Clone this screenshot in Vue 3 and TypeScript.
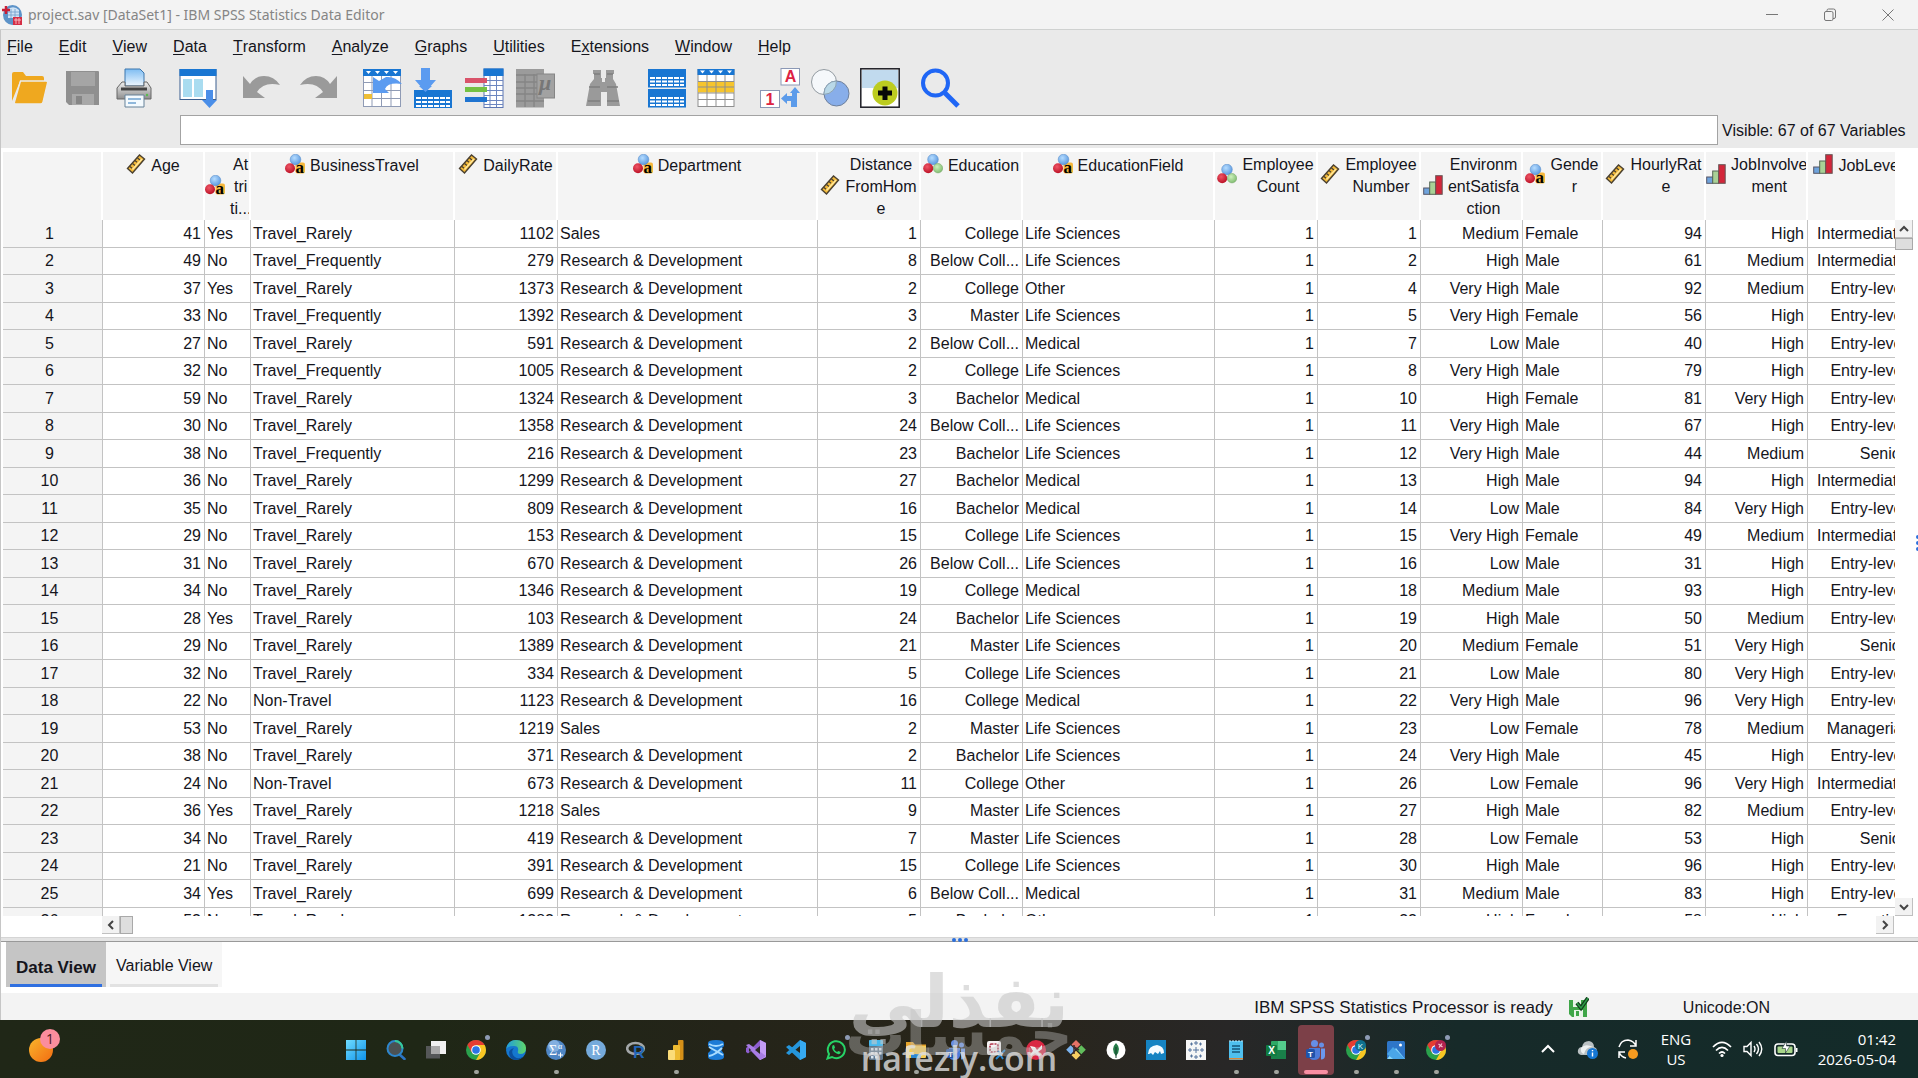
<script setup lang="ts">
import { ref } from 'vue'

type Measure = 'scale' | 'string' | 'nominal' | 'ordinal'
interface Column {
  lines: string[]
  icon: Measure
  align: 'left' | 'right'
  width: number
}

const menus: [string, string, string][] = [
  ['', 'F', 'ile'],
  ['', 'E', 'dit'],
  ['', 'V', 'iew'],
  ['', 'D', 'ata'],
  ['', 'T', 'ransform'],
  ['', 'A', 'nalyze'],
  ['', 'G', 'raphs'],
  ['', 'U', 'tilities'],
  ['E', 'x', 'tensions'],
  ['', 'W', 'indow'],
  ['', 'H', 'elp'],
]

const toolGroups: { id: string; label: string }[][] = [
  [
    { id: 'open', label: 'Open' },
    { id: 'save', label: 'Save' },
    { id: 'print', label: 'Print' },
  ],
  [{ id: 'recall', label: 'Recall dialogs' }],
  [
    { id: 'undo', label: 'Undo' },
    { id: 'redo', label: 'Redo' },
  ],
  [
    { id: 'gotocase', label: 'Go to case' },
    { id: 'gotovar', label: 'Go to variable' },
    { id: 'variables', label: 'Variables' },
    { id: 'stats', label: 'Descriptive statistics' },
  ],
  [{ id: 'find', label: 'Find' }],
  [
    { id: 'split', label: 'Split file' },
    { id: 'select', label: 'Select cases' },
  ],
  [
    { id: 'labels', label: 'Value labels' },
    { id: 'sets', label: 'Use variable sets' },
    { id: 'custom', label: 'Customize toolbar' },
  ],
  [{ id: 'search', label: 'Search' }],
]

const columns: Column[] = [
  { lines: ['Age'], icon: 'scale', align: 'right', width: 102 },
  { lines: ['At', 'tri', 'ti...'], icon: 'string', align: 'left', width: 46 },
  { lines: ['BusinessTravel'], icon: 'string', align: 'left', width: 204 },
  { lines: ['DailyRate'], icon: 'scale', align: 'right', width: 103 },
  { lines: ['Department'], icon: 'string', align: 'left', width: 260 },
  { lines: ['Distance', 'FromHom', 'e'], icon: 'scale', align: 'right', width: 103 },
  { lines: ['Education'], icon: 'nominal', align: 'right', width: 102 },
  { lines: ['EducationField'], icon: 'string', align: 'left', width: 192 },
  { lines: ['Employee', 'Count'], icon: 'nominal', align: 'right', width: 103 },
  { lines: ['Employee', 'Number'], icon: 'scale', align: 'right', width: 103 },
  { lines: ['Environm', 'entSatisfa', 'ction'], icon: 'ordinal', align: 'right', width: 102 },
  { lines: ['Gende', 'r'], icon: 'string', align: 'left', width: 80 },
  { lines: ['HourlyRat', 'e'], icon: 'scale', align: 'right', width: 103 },
  { lines: ['JobInvolve', 'ment'], icon: 'ordinal', align: 'right', width: 102 },
  { lines: ['JobLevel'], icon: 'ordinal', align: 'right', width: 102 },
]

const source = `41|Yes|Travel_Rarely|1102|Sales|1|College|Life Sciences|1|1|Medium|Female|94|High|Intermediate
49|No|Travel_Frequently|279|RD|8|Below Coll...|Life Sciences|1|2|High|Male|61|Medium|Intermediate
37|Yes|Travel_Rarely|1373|RD|2|College|Other|1|4|Very High|Male|92|Medium|Entry-level
33|No|Travel_Frequently|1392|RD|3|Master|Life Sciences|1|5|Very High|Female|56|High|Entry-level
27|No|Travel_Rarely|591|RD|2|Below Coll...|Medical|1|7|Low|Male|40|High|Entry-level
32|No|Travel_Frequently|1005|RD|2|College|Life Sciences|1|8|Very High|Male|79|High|Entry-level
59|No|Travel_Rarely|1324|RD|3|Bachelor|Medical|1|10|High|Female|81|Very High|Entry-level
30|No|Travel_Rarely|1358|RD|24|Below Coll...|Life Sciences|1|11|Very High|Male|67|High|Entry-level
38|No|Travel_Frequently|216|RD|23|Bachelor|Life Sciences|1|12|Very High|Male|44|Medium|Senior
36|No|Travel_Rarely|1299|RD|27|Bachelor|Medical|1|13|High|Male|94|High|Intermediate
35|No|Travel_Rarely|809|RD|16|Bachelor|Medical|1|14|Low|Male|84|Very High|Entry-level
29|No|Travel_Rarely|153|RD|15|College|Life Sciences|1|15|Very High|Female|49|Medium|Intermediate
31|No|Travel_Rarely|670|RD|26|Below Coll...|Life Sciences|1|16|Low|Male|31|High|Entry-level
34|No|Travel_Rarely|1346|RD|19|College|Medical|1|18|Medium|Male|93|High|Entry-level
28|Yes|Travel_Rarely|103|RD|24|Bachelor|Life Sciences|1|19|High|Male|50|Medium|Entry-level
29|No|Travel_Rarely|1389|RD|21|Master|Life Sciences|1|20|Medium|Female|51|Very High|Senior
32|No|Travel_Rarely|334|RD|5|College|Life Sciences|1|21|Low|Male|80|Very High|Entry-level
22|No|Non-Travel|1123|RD|16|College|Medical|1|22|Very High|Male|96|Very High|Entry-level
53|No|Travel_Rarely|1219|Sales|2|Master|Life Sciences|1|23|Low|Female|78|Medium|Managerial
38|No|Travel_Rarely|371|RD|2|Bachelor|Life Sciences|1|24|Very High|Male|45|High|Entry-level
24|No|Non-Travel|673|RD|11|College|Other|1|26|Low|Female|96|Very High|Intermediate
36|Yes|Travel_Rarely|1218|Sales|9|Master|Life Sciences|1|27|High|Male|82|Medium|Entry-level
34|No|Travel_Rarely|419|RD|7|Master|Life Sciences|1|28|Low|Female|53|High|Senior
21|No|Travel_Rarely|391|RD|15|College|Life Sciences|1|30|High|Male|96|High|Entry-level
34|Yes|Travel_Rarely|699|RD|6|Below Coll...|Medical|1|31|Medium|Male|83|High|Entry-level
53|No|Travel_Rarely|1282|RD|5|Bachelor|Other|1|32|High|Female|58|High|Executive`

const rows = source
  .split('\n')
  .map((line) => line.split('|').map((v) => (v === 'RD' ? 'Research & Development' : v)))

const apps: { id: string; label: string; open?: boolean; active?: boolean; note?: boolean }[] = [
  { id: 'start', label: 'Start' },
  { id: 'winsearch', label: 'Search' },
  { id: 'taskview', label: 'Task view' },
  { id: 'chrome', label: 'Chrome', open: true, note: true },
  { id: 'edge', label: 'Edge' },
  { id: 'spss', label: 'SPSS Statistics', open: true },
  { id: 'rstudio', label: 'RStudio' },
  { id: 'rlang', label: 'R' },
  { id: 'powerbi', label: 'Power BI', open: true },
  { id: 'ssms', label: 'SQL studio' },
  { id: 'vs', label: 'Visual Studio' },
  { id: 'vscode', label: 'VS Code' },
  { id: 'whatsapp', label: 'WhatsApp', note: true },
  { id: 'calc', label: 'Calculator' },
  { id: 'explorer', label: 'File Explorer', open: true },
  { id: 'teams', label: 'Teams' },
  { id: 'snip', label: 'Snipping Tool' },
  { id: 'redapp', label: 'Remote' },
  { id: 'git', label: 'Git' },
  { id: 'mongo', label: 'MongoDB' },
  { id: 'mysql', label: 'MySQL Workbench' },
  { id: 'tableau', label: 'Tableau' },
  { id: 'notepad', label: 'Notepad', open: true },
  { id: 'excel', label: 'Excel', open: true },
  { id: 'teams', label: 'Teams meeting', active: true },
  { id: 'chromek', label: 'Chrome profile K', open: true, note: true },
  { id: 'photos', label: 'Photos', open: true },
  { id: 'chromex', label: 'Chrome profile', open: true, note: true },
]

const cellValue = ref('')
</script>

<template>
  <svg class="defs" width="0" height="0" aria-hidden="true">
    <defs>
      <linearGradient id="gOrange" x1="0" y1="0" x2="1" y2="1">
        <stop offset="0" stop-color="#f9b52c" /><stop offset="1" stop-color="#f26c12" />
      </linearGradient>
      <linearGradient id="gWin" x1="0" y1="0" x2="1" y2="1">
        <stop offset="0" stop-color="#6fdcff" /><stop offset="1" stop-color="#0f93ea" />
      </linearGradient>
      <linearGradient id="gEdge" x1="0" y1="0" x2="1" y2="0">
        <stop offset="0" stop-color="#1f9be0" /><stop offset="1" stop-color="#5fd66a" />
      </linearGradient>
      <linearGradient id="gPaper" x1="0" y1="0" x2="0" y2="1">
        <stop offset="0" stop-color="#7fbdf2" /><stop offset="1" stop-color="#eef7ff" />
      </linearGradient>
      <linearGradient id="gPrinter" x1="0" y1="0" x2="0" y2="1">
        <stop offset="0" stop-color="#f0f0f0" /><stop offset="1" stop-color="#8e8e8e" />
      </linearGradient>
      <radialGradient id="gBlue" cx="0.4" cy="0.35" r="0.7">
        <stop offset="0" stop-color="#b5dcff" /><stop offset="1" stop-color="#5796de" />
      </radialGradient>
      <radialGradient id="gRed" cx="0.4" cy="0.35" r="0.7">
        <stop offset="0" stop-color="#ef5566" /><stop offset="1" stop-color="#b80d22" />
      </radialGradient>
      <radialGradient id="gGreen" cx="0.4" cy="0.35" r="0.7">
        <stop offset="0" stop-color="#cdf0bd" /><stop offset="1" stop-color="#7dba6c" />
      </radialGradient>

      <symbol id="m-scale" viewBox="0 0 20 20">
        <path d="M1.500 14.500 13.500 1 18.500 5 6.500 19z" fill="#f2b93a" stroke="#4a4030" stroke-width="1.400" />
        <path d="M4 12.500l2 1.700M6.500 9.500l2.500 2M9 6.500l2 1.700M11.500 4l2.500 2" stroke="#4a4030" stroke-width="1.300" />
        <path d="M6.500 15.500 16 5" stroke="#ffe79a" stroke-width="1.500" />
      </symbol>
      <symbol id="m-string" viewBox="0 0 20 20">
        <rect x="10.500" y="8.500" width="9.500" height="11" rx="2" fill="#f6b73c" />
        <circle cx="10.500" cy="5.500" r="5.300" fill="url(#gBlue)" stroke="#5b8fcb" stroke-width=".6" />
        <circle cx="5" cy="14.200" r="5" fill="url(#gRed)" />
        <text x="10.500" y="19" font-family="Liberation Serif, serif" font-weight="700" font-size="17">a</text>
      </symbol>
      <symbol id="m-nominal" viewBox="0 0 20 20">
        <circle cx="10" cy="5.500" r="5.300" fill="url(#gBlue)" stroke="#5b8fcb" stroke-width=".6" />
        <circle cx="5.200" cy="14.200" r="5" fill="url(#gRed)" />
        <circle cx="15" cy="14.200" r="4.700" fill="url(#gGreen)" stroke="#7dac70" stroke-width=".6" />
      </symbol>
      <symbol id="m-ordinal" viewBox="0 0 20 20">
        <rect x=".7" y="13" width="6" height="6.300" fill="#6fa3dc" stroke="#556" />
        <rect x="6.700" y="7" width="6" height="12.300" fill="#a9d196" stroke="#565" />
        <rect x="12.700" y=".7" width="6.500" height="18.600" fill="#d3263a" stroke="#655" />
      </symbol>

      <symbol id="t-open" viewBox="0 0 40 40">
        <path d="M2 33V6q0-2 2-2h9l3 4h16q2 0 2 2v3H10z" fill="#efa81f" />
        <path d="M10.500 13H36q2 0 1.500 2L33 34q-.5 2-2.500 2H6q-2 0-1.500-2z" fill="#efa81f" stroke="#ebebeb" stroke-width="1.300" />
      </symbol>
      <symbol id="t-save" viewBox="0 0 40 40">
        <path d="M4 3h32q1 0 1 1v33H7l-3-3z" fill="#8f8f8f" />
        <rect x="9" y="4" width="24" height="14" fill="#a5a5a5" />
        <path d="M10 26h22v11H10z" fill="#a8a8a8" /><rect x="14" y="28" width="6" height="8" fill="#868686" />
      </symbol>
      <symbol id="t-print" viewBox="0 0 40 40">
        <path d="M11 1h15l4 4v13H11z" fill="url(#gPaper)" stroke="#3c76ad" />
        <path d="M8 14h3v4h19v-4h3l4 6v11H3V20z" fill="url(#gPrinter)" stroke="#666" />
        <path d="M7 21h26" stroke="#444" stroke-width="3" />
        <path d="M11 27h19v12H11z" fill="#f4fafe" stroke="#668299" />
        <path d="M14 31h13M14 35h8" stroke="#6fa3cf" stroke-width="1.500" />
        <circle cx="33" cy="27" r="1.200" fill="#57bd4c" />
      </symbol>
      <symbol id="t-recall" viewBox="0 0 40 40">
        <rect x="2" y="1.500" width="36" height="30" fill="#fff" stroke="#3a5f8f" />
        <rect x="1.500" y="1" width="37" height="7" fill="#1976d2" />
        <path d="M5 11h9v18H5zM16 11h9v18h-9z" fill="#a9dcf0" />
        <path d="M28 22h7v10h4l-7.500 8L24 32h4z" fill="#4a8ee8" />
      </symbol>
      <symbol id="t-undo" viewBox="0 0 40 40">
        <path d="M1 8v22h22l-8-6q7-11 23-7Q32 8 22 8q-9 0-14 8z" fill="#9a9a9a" />
      </symbol>
      <symbol id="t-redo" viewBox="0 0 40 40">
        <path d="M39 8v22H17l8-6Q18 13 2 17 8 8 18 8q9 0 14 8z" fill="#9a9a9a" />
      </symbol>
      <symbol id="t-gotocase" viewBox="0 0 40 40">
        <rect x="1.500" y="1.500" width="37" height="37" fill="#fff" stroke="#8f9bb5" />
        <path d="M1.500 14.500h37M1.500 22.500h37M1.500 30.500h37M10 8v31M19.500 8v31M29 8v31" stroke="#8f9bb5" />
        <rect x="1" y="1" width="38" height="7" fill="#1976d2" />
        <path d="M4 3h5l-2.500 3zM13 3h5l-2.500 3zM22 3h5l-2.500 3zM31 3h5l-2.500 3z" fill="#fff" />
        <rect x="2" y="26" width="8" height="5" fill="#eebe35" />
        <path d="M11 9v16h16l-4-4q3-7 17-5-7-8-16-7l-7 4z" fill="#5b9bf0" />
      </symbol>
      <symbol id="t-gotovar" viewBox="0 0 40 40">
        <path d="M8 0h9v12h6L12.500 24 2 12h6z" fill="#5b9bf0" />
        <path d="M1 22h38v18H1z" fill="#1976d2" />
        <path d="M3 29h5v2H3zm6 0h5v2H9zm6 0h5v2h-5zm6 0h5v2h-5zm6 0h5v2h-5zm6 0h4v2h-4zM3 33h5v2H3zm6 0h5v2H9zm6 0h5v2h-5zm6 0h5v2h-5zm6 0h5v2h-5zm6 0h4v2h-4zM3 37h5v2H3zm6 0h5v2H9zm6 0h5v2h-5zm6 0h5v2h-5zm6 0h5v2h-5zm6 0h4v2h-4z" fill="#fff" />
        <path d="M12.500 24 6 18h13z" fill="#5b9bf0" />
      </symbol>
      <symbol id="t-variables" viewBox="0 0 40 40">
        <rect x="20" y="1" width="19" height="38.500" fill="#fff" stroke="#5d76b3" />
        <path d="M26 8v31M32.500 8v31M20 12.500h19M20 17.500h19M20 22.500h19M20 27.500h19M20 32.500h19M20 36.500h19" stroke="#6d86c0" />
        <rect x="19.500" y=".5" width="20" height="7.500" fill="#1976d2" />
        <path d="M1 10h22v5H1z" fill="#d9536a" /><path d="M1 19h22v5H1z" fill="#74c143" /><path d="M1 29h22v5H1z" fill="#1f74d0" />
      </symbol>
      <symbol id="t-stats" viewBox="0 0 40 40">
        <rect x="1" y="1" width="28" height="38.500" fill="#9b9b9b" />
        <path d="M1 7h28M1 14h28M1 20h28M1 26h28M1 33h28M10 6v33M19 6v33" stroke="#858585" stroke-width="1.400" />
        <rect x="22" y="6" width="17.500" height="24" fill="#a2a2a2" stroke="#858585" />
        <text x="24" y="22" font-family="Liberation Serif, serif" font-style="italic" font-weight="700" font-size="22" fill="#777">μ</text>
      </symbol>
      <symbol id="t-find" viewBox="0 0 40 40">
        <path d="M10 2h8v8h1v4h3v-4h1V2h8v4h-1v5l3 5 4 22H24V24h-6v14H3l4-22 4-5V6h-1z" fill="#9a9a9a" />
        <path d="M11 6h6M24 6h6M6 19h11M24 19h11M5 33h12M24 33h12" stroke="#7f7f7f" stroke-width="1.500" />
      </symbol>
      <symbol id="t-split" viewBox="0 0 40 40">
        <path d="M1 1h38v18.500H1zM1 21h38v18.500H1z" fill="#1976d2" />
        <path d="M3 9h5v2H3zm6 0h5v2H9zm6 0h5v2h-5zm6 0h5v2h-5zm6 0h5v2h-5zm6 0h4v2h-4zM3 12.500h5v2H3zm6 0h5v2H9zm6 0h5v2h-5zm6 0h5v2h-5zm6 0h5v2h-5zm6 0h4v2h-4zM3 16h5v2H3zm6 0h5v2H9zm6 0h5v2h-5zm6 0h5v2h-5zm6 0h5v2h-5zm6 0h4v2h-4zM3 29h5v2H3zm6 0h5v2H9zm6 0h5v2h-5zm6 0h5v2h-5zm6 0h5v2h-5zm6 0h4v2h-4zM3 32.500h5v2H3zm6 0h5v2H9zm6 0h5v2h-5zm6 0h5v2h-5zm6 0h5v2h-5zm6 0h4v2h-4zM3 36h5v2H3zm6 0h5v2H9zm6 0h5v2h-5zm6 0h5v2h-5zm6 0h5v2h-5zm6 0h4v2h-4z" fill="#fff" />
      </symbol>
      <symbol id="t-select" viewBox="0 0 40 40">
        <rect x="2" y="1.500" width="36" height="37" fill="#fff" stroke="#8f8f8f" />
        <path d="M2 13.500h36v11H2z" fill="#f6c52d" />
        <path d="M2 13.500h36M2 19h36M2 25h36M2 31.500h36M11 7v32M20 7v32M29 7v32" stroke="#8f8f8f" />
        <rect x="1.500" y="1" width="37" height="6" fill="#1976d2" />
        <path d="M4 2.500h5l-2.500 3zM13 2.500h5l-2.500 3zM22 2.500h5l-2.500 3zM31 2.500h5l-2.500 3z" fill="#fff" />
      </symbol>
      <symbol id="t-labels" viewBox="0 0 40 40">
        <rect x="21" y=".5" width="18.500" height="16.500" fill="#fff" stroke="#8b98b5" />
        <text x="30.500" y="14" text-anchor="middle" font-family="Liberation Sans, sans-serif" font-weight="700" font-size="16" fill="#dd2343">A</text>
        <rect x=".5" y="22.500" width="19" height="17" fill="#fff" stroke="#8b98b5" />
        <text x="10" y="36.500" text-anchor="middle" font-family="Liberation Sans, sans-serif" font-weight="700" font-size="16" fill="#dd2343">1</text>
        <path d="M35 19l5 6h-3v14h-6v-6h-4v3l-6-5.500 6-5.500v3h5v-3h-2z" fill="#5b9bea" />
      </symbol>
      <symbol id="t-sets" viewBox="0 0 40 40">
        <circle cx="14" cy="14" r="12.500" fill="#f5f8fb" stroke="#939ba1" />
        <circle cx="26.500" cy="25.500" r="12.500" fill="#88aeea" stroke="#6d7f9b" />
        <path d="M14 25.600A12.500 12.500 0 0 1 26.400 13 12.500 12.500 0 0 1 14 26.400z" fill="#b9d8e8" stroke="#8ba2b2" />
      </symbol>
      <symbol id="t-custom" viewBox="0 0 40 40">
        <rect x=".8" y=".8" width="38.400" height="38.400" fill="#fff" stroke="#1d1d24" stroke-width="1.500" />
        <rect x="2" y="2" width="36" height="18" fill="#c1daee" />
        <circle cx="25" cy="25" r="12.500" fill="#bccc20" />
        <path d="M22.500 18.500h5v4H32v5h-4.500V32h-5v-4.500H18v-5h4.500z" fill="#080808" />
      </symbol>
      <symbol id="t-search" viewBox="0 0 40 40">
        <circle cx="15.500" cy="15" r="12.500" fill="none" stroke="#1f66f5" stroke-width="4" />
        <path d="M25 25l13 13" stroke="#1f66f5" stroke-width="5" />
      </symbol>

      <symbol id="k-start" viewBox="0 0 20 20">
        <path d="M0 0h9.600v9.600H0zM10.400 0H20v9.600h-9.600zM0 10.400h9.600V20H0zM10.400 10.400H20V20h-9.600z" fill="url(#gWin)" />
      </symbol>
      <symbol id="k-winsearch" viewBox="0 0 20 20">
        <path d="M13 14l5.500 5" stroke="#2b74c4" stroke-width="2.600" stroke-linecap="round" />
        <circle cx="9" cy="8.500" r="7.500" fill="#4b5254" stroke="#2d86cc" stroke-width="2" />
        <path d="M9 1a7.500 7.500 0 0 1 7.500 7.500" fill="none" stroke="#35cb9b" stroke-width="2" />
      </symbol>
      <symbol id="k-taskview" viewBox="0 0 20 20">
        <rect y="6" width="14" height="12.500" fill="#555758" /><rect x="5" y="1" width="15" height="13" fill="#f1f1f1" />
        <rect x="5" y="6" width="9" height="8" fill="#aaa" />
      </symbol>
      <symbol id="k-chrome" viewBox="0 0 20 20">
        <circle cx="10" cy="10" r="10" fill="#2aa14c" />
        <path d="M1.340 5A10 10 0 0 1 18.660 5H10L5.700 12.500z" fill="#e53c32" />
        <path d="M18.660 5A10 10 0 0 1 10 20l4.300-7.500L10 5z" fill="#f9c623" />
        <circle cx="10" cy="10" r="4.800" fill="#fff" /><circle cx="10" cy="10" r="3.800" fill="#2b74e6" />
      </symbol>
      <symbol id="k-chromek" viewBox="0 0 20 20">
        <use href="#k-chrome" /><circle cx="14.500" cy="5.500" r="5.500" fill="#0f718e" />
        <text x="14.500" y="8.500" text-anchor="middle" font-family="Liberation Sans, sans-serif" font-size="8" fill="#dff">K</text>
      </symbol>
      <symbol id="k-chromex" viewBox="0 0 20 20">
        <use href="#k-chrome" /><circle cx="14.500" cy="5.500" r="5.500" fill="#b1224f" />
        <path d="M12.500 4l4 3M16 3.500l-3 4" stroke="#f8c4cf" stroke-width="1.200" />
      </symbol>
      <symbol id="k-edge" viewBox="0 0 20 20">
        <circle cx="10" cy="10" r="10" fill="#1577cf" />
        <path d="M0 9Q2 0 10 0q9 0 10 8 0 6-6 6-3 0-2-3 1-5-4-5Q2 6 0 9z" fill="url(#gEdge)" />
        <path d="M8 8q-3 3-1 7 3 5 10 2-3 3-8 3Q3 19 3 12q1-3 5-4z" fill="#0c4f9e" />
      </symbol>
      <symbol id="k-spss" viewBox="0 0 20 20">
        <circle cx="10" cy="10" r="10" fill="#4f86c4" /><circle cx="8" cy="6" r="6" fill="#83afe0" />
        <text x="3" y="15" font-family="Liberation Serif, serif" font-size="14" fill="#fff">Σ</text>
        <text x="12" y="9" font-family="Liberation Serif, serif" font-size="8" fill="#fff">α</text>
        <path d="M12 15h5M14.500 12.500v5" stroke="#fff" />
      </symbol>
      <symbol id="k-rstudio" viewBox="0 0 20 20">
        <circle cx="10" cy="10" r="10" fill="#75aadb" />
        <text x="10" y="15" text-anchor="middle" font-family="Liberation Serif, serif" font-size="14" fill="#fff">R</text>
      </symbol>
      <symbol id="k-rlang" viewBox="0 0 20 20">
        <ellipse cx="9.500" cy="8.500" rx="8.300" ry="5.500" fill="none" stroke="#a3a7a9" stroke-width="2.600" />
        <text x="7" y="18" font-family="Liberation Sans, sans-serif" font-weight="700" font-size="16" fill="#2266b8">R</text>
      </symbol>
      <symbol id="k-powerbi" viewBox="0 0 20 20">
        <rect x="12" width="5.500" height="20" rx="1" fill="#d59018" /><rect x="7" y="5" width="7" height="15" rx="1" fill="#edba31" />
        <rect x="2" y="10" width="7" height="10" rx="1" fill="#fbdc78" />
      </symbol>
      <symbol id="k-ssms" viewBox="0 0 20 20">
        <path d="M2 3q0-3 8-3t8 3v3q-4 4-2 5l2 3v3q0 3-8 3t-8-3v-4q4-3 2-5L2 6z" fill="#1c7bd6" />
        <path d="M3 4q7 4 14 0M3 7l14 8M3 16q6-1 13-8" fill="none" stroke="#a9dcff" stroke-width="2" />
      </symbol>
      <symbol id="k-vs" viewBox="0 0 20 20">
        <path d="M14 0l6 3v14l-6 3-9-9-3 2.500L0 12V8l2-1.500L5 9z" fill="#8d5ed0" />
        <path d="M14 0l6 3v14l-6 3z" fill="#c49cf6" /><path d="M0 5l3-1 17 12-6 4z" fill="#a87de4" /><path d="M3 8v4l2-2zM14 6v8L9 10z" fill="#292a24" />
      </symbol>
      <symbol id="k-vscode" viewBox="0 0 20 20">
        <path d="M14 0l6 3v14l-6 3L0 7l3-2 11 8V6L3 15l-3-2z" fill="#2596dc" /><path d="M14 0l6 3v14l-6 3z" fill="#36aaf2" />
      </symbol>
      <symbol id="k-whatsapp" viewBox="0 0 20 20">
        <path d="M1.500 18.500L3 14a8.500 8.500 0 1 1 3 3z" fill="none" stroke="#27d366" stroke-width="2" />
        <path d="M6.500 5.500q1.500-1 2 .5l.5 1.800-1 1.200q1 2 3 3l1.300-1 2 .8q1 1-.5 2-2 1.200-5.500-1.800-3.200-3.500-1.800-6.500z" fill="#27d366" />
      </symbol>
      <symbol id="k-calc" viewBox="0 0 20 20">
        <rect x="3" width="14" height="20" rx="1.500" fill="#62788d" /><rect x="3" width="14" height="6" rx="1" fill="#46b9ee" />
        <path d="M5 8h2.500v2.500H5zm4 0h2.500v2.500H9zm4 0h2.500v2.500H13zM5 12h2.500v2.500H5zm4 0h2.500v2.500H9zm4 0h2.500v2.500H13zM5 16h2.500v2.500H5zm4 0h2.500v2.500H9z" fill="#dbe7f2" />
      </symbol>
      <symbol id="k-explorer" viewBox="0 0 20 20">
        <path d="M0 2h7l2 2.500h11V17H0z" fill="#e5a42c" /><path d="M0 6h20v11q0 1-1 1H1q-1 0-1-1z" fill="#f8ce56" /><path d="M5 14h10v4H5z" fill="#2f88d2" />
      </symbol>
      <symbol id="k-teams" viewBox="0 0 20 20">
        <circle cx="8.500" cy="3.500" r="3.500" fill="#668fe6" /><circle cx="15.500" cy="5" r="2.500" fill="#668fe6" />
        <path d="M3 8h11v8q-1 4-6 4t-5-5z" fill="#4c7bd9" /><path d="M15 8.500h4v7q0 4-4 4z" fill="#6b98ee" />
        <rect y="9" width="9" height="9" rx="1.500" fill="#2053a8" /><text x="4.500" y="16.500" text-anchor="middle" font-family="Liberation Sans, sans-serif" font-weight="700" font-size="8" fill="#fff">T</text>
      </symbol>
      <symbol id="k-snip" viewBox="0 0 20 20">
        <rect x="1" y="1" width="14" height="14" rx="2" fill="#f6f3f3" /><rect x="4" y="4" width="8" height="8" rx="1.500" fill="none" stroke="#b33a4f" stroke-width="1.700" stroke-dasharray="2 1" />
        <path d="M10 19l9-9M12 11l5 8" stroke="#2785cf" stroke-width="1.800" />
      </symbol>
      <symbol id="k-redapp" viewBox="0 0 20 20">
        <circle cx="10" cy="10" r="10" fill="#da2743" /><path d="M4 6l5 1 2 3 5-5v4l-4 3 3 3-2 1-4-3-4 3-1-2 3-3z" fill="#fff" />
      </symbol>
      <symbol id="k-git" viewBox="0 0 20 20">
        <path d="M10 0l4.500 4.500L10 9 5.500 4.500z" fill="#e67267" /><path d="M4.700 5.300l4.500 4.500-4.500 4.500L.2 9.800z" fill="#7cb4ef" />
        <path d="M15.300 5.300l4.500 4.500-4.500 4.500-4.500-4.500z" fill="#61bd5c" /><path d="M10 10.700l4.500 4.500L10 19.700l-4.500-4.500z" fill="#f6cf62" /><path d="M8 5v9M8 7l5 3" stroke="#40282b" stroke-width="1.500" />
      </symbol>
      <symbol id="k-mongo" viewBox="0 0 20 20">
        <circle cx="10" cy="10" r="9.500" fill="#fff" /><path d="M10 3q6 6 0 13Q4 9 10 3z" fill="#257c49" /><path d="M10 7v11" stroke="#153f2b" />
      </symbol>
      <symbol id="k-mysql" viewBox="0 0 20 20">
        <rect width="20" height="20" fill="#1683c2" /><path d="M2 14q0-8 9-9 7 1 7 8l-3 1-1-3-2 3-3-2-2 3-2-2-2 1z" fill="#f5fbff" />
      </symbol>
      <symbol id="k-tableau" viewBox="0 0 20 20">
        <rect width="20" height="20" fill="#f6f6f6" /><path d="M10 7v6M7 10h6M10 1v4M8 3h4M10 15v4M8 17h4M2 10h4M4 8v4M14 10h4M16 8v4M4 4h3M5.500 2.500v3M13 4h3M14.500 2.500v3M4 16h3M5.500 14.500v3M13 16h3M14.500 14.500v3" stroke="#54739d" />
      </symbol>
      <symbol id="k-notepad" viewBox="0 0 20 20">
        <rect x="3" y="1" width="14" height="19" rx="1" fill="#4fc0ef" /><path d="M3 18h14v1.500H3z" fill="#d7873c" /><path d="M6 6h8M6 9h8M6 12h8" stroke="#14567b" stroke-width="1.400" /><path d="M4 2V0M7 2V0M10 2V0M13 2V0M16 2V0" stroke="#b9edff" />
      </symbol>
      <symbol id="k-excel" viewBox="0 0 20 20">
        <rect x="5" y="1" width="15" height="18" rx="1" fill="#2fa866" /><path d="M12 1h8v9h-8z" fill="#54cb8c" /><path d="M5 10h15v9H5z" fill="#198049" />
        <rect y="5" width="11" height="11" rx="1" fill="#107c41" /><text x="5.500" y="14" text-anchor="middle" font-family="Liberation Sans, sans-serif" font-weight="700" font-size="10" fill="#fff">X</text>
      </symbol>
      <symbol id="k-photos" viewBox="0 0 20 20">
        <rect x="1" y="1" width="18" height="18" rx="1.500" fill="#2e76c8" /><path d="M1 19L10 8l9 11z" fill="#88d8fb" /><path d="M1 14l6-7 12 12H7z" fill="#4aa6e8" /><circle cx="14.500" cy="5" r="1.500" fill="#fff" />
      </symbol>
    </defs>
  </svg>

  <div class="screen">
    <header class="titlebar">
      <svg class="app-icon" viewBox="0 0 20 20" aria-hidden="true">
        <ellipse cx="10.500" cy="10" rx="9.500" ry="10" fill="#5d93c8" />
        <path d="M6 4q6-4 11 1v8H6z" fill="#cfe3f5" /><path d="M6 7h11M6 10h11M9 4v9M13 4v9" stroke="#6f9dca" stroke-width=".8" />
        <path d="M0 5h8M4 1v8" stroke="#c91e35" stroke-width="2.500" />
        <rect x="11" y="12" width="9" height="8" fill="#d52e45" /><path d="M12 15h7M14 13v6M17 13v6" stroke="#ffd3d8" stroke-width=".8" />
      </svg>
      <h1 class="title">project.sav [DataSet1] - IBM SPSS Statistics Data Editor</h1>
      <div class="win-buttons">
        <button type="button" aria-label="Minimize"><svg viewBox="0 0 14 14"><path d="M1 6.500h12" /></svg></button>
        <button type="button" aria-label="Restore"><svg viewBox="0 0 14 14"><rect x="1.500" y="3.500" width="8.500" height="9" rx="1.500" /><path d="M4 3.500V2.500q0-1.500 1.500-1.500h5q2 0 2 2v6q0 1.500-1.500 1.500h-1" /></svg></button>
        <button type="button" aria-label="Close"><svg viewBox="0 0 14 14"><path d="M1.500 1.500l11 11M12.500 1.500l-11 11" /></svg></button>
      </div>
    </header>

    <main class="window">
      <nav class="menubar">
        <button v-for="m in menus" :key="m.join('')" type="button">{{ m[0] }}<u>{{ m[1] }}</u>{{ m[2] }}</button>
      </nav>

      <div class="toolbar">
        <div v-for="(group, g) in toolGroups" :key="g" class="group" :class="`group-${g}`">
          <button v-for="tool in group" :key="tool.id" type="button" :aria-label="tool.label">
            <svg><use :href="`#t-${tool.id}`" /></svg>
          </button>
        </div>
      </div>

      <div class="entry">
        <input v-model="cellValue" type="text" aria-label="Cell value" />
        <span class="visible">Visible: 67 of 67 Variables</span>
      </div>

      <section class="sheet">
        <div class="sheet-main">
          <div class="clip">
            <table>
              <colgroup>
                <col class="num-col" />
                <col v-for="(c, i) in columns" :key="i" :style="{ width: c.width + 'px' }" />
              </colgroup>
              <thead>
                <tr>
                  <th class="corner"></th>
                  <th v-for="(c, i) in columns" :key="i" scope="col">
                    <div class="head">
                      <svg><use :href="`#m-${c.icon}`" /></svg>
                      <span><template v-for="(l, k) in c.lines" :key="k"><br v-if="k" />{{ l }}</template></span>
                    </div>
                  </th>
                </tr>
              </thead>
              <tbody>
                <tr v-for="(r, n) in rows" :key="n">
                  <th scope="row">{{ n + 1 }}</th>
                  <td v-for="(v, i) in r" :key="i" :class="columns[i].align">{{ v }}</td>
                </tr>
              </tbody>
            </table>
          </div>
          <div class="vscroll">
            <button type="button" aria-label="Scroll up"><svg viewBox="0 0 10 10"><path d="M1 7l4-4 4 4" /></svg></button>
            <div class="vthumb"></div>
            <button type="button" class="end" aria-label="Scroll down"><svg viewBox="0 0 10 10"><path d="M1 3l4 4 4-4" /></svg></button>
          </div>
        </div>
        <div class="hscroll">
          <button type="button" aria-label="Scroll left"><svg viewBox="0 0 10 10"><path d="M7 1L3 5l4 4" /></svg></button>
          <div class="hthumb"></div>
          <button type="button" class="end" aria-label="Scroll right"><svg viewBox="0 0 10 10"><path d="M3 1l4 4-4 4" /></svg></button>
        </div>
        <div class="side-grip"><i></i><i></i><i></i></div>
      </section>

      <div class="divider"><i></i><i></i><i></i></div>

      <div class="tabs" role="tablist">
        <button type="button" role="tab" aria-selected="true" class="tab current">Data View</button>
        <button type="button" role="tab" aria-selected="false" class="tab">Variable View</button>
      </div>

      <footer class="status">
        <span class="ready">IBM SPSS Statistics Processor is ready</span>
        <svg viewBox="0 0 20 20" aria-hidden="true">
          <path d="M0 3h18v17H3l-3-3z" fill="#3fa648" /><rect x="4" y="3" width="8" height="7" fill="#e8f4e8" /><rect x="5" y="13" width="9" height="7" fill="#e8f4e8" /><path d="M7 14h3v5H7z" fill="#3fa648" />
          <path d="M8 6l4 5 7-10" fill="none" stroke="#123c1c" stroke-width="4" /><path d="M8 6l4 5 7-10" fill="none" stroke="#2c9a47" stroke-width="1.500" />
        </svg>
        <span class="unicode">Unicode:ON</span>
      </footer>
    </main>

    <div class="taskbar">
      <div class="widgets">
        <button type="button" aria-label="Widgets">
          <svg viewBox="0 0 24 24"><circle cx="12" cy="12" r="12" fill="url(#gOrange)" /></svg>
          <span class="badge">1</span>
        </button>
      </div>
      <div class="apps">
        <button v-for="(a, i) in apps" :key="i" type="button" :aria-label="a.label" :class="{ active: a.active, open: a.open, note: a.note }">
          <svg><use :href="`#k-${a.id}`" /></svg>
        </button>
      </div>
      <div class="tray">
        <svg viewBox="0 0 24 24" class="t-icon chevron"><path d="M6 15l6-6 6 6" fill="none" stroke="#fff" stroke-width="2" /></svg>
        <svg viewBox="0 0 24 24" class="t-icon"><path d="M5 18q-4-1-3-5 1-3 4-3 1-6 7-6 5 1 5 6 3 1 3 4 0 4-4 4z" fill="#b9c0c2" /><path d="M5 11q4-5 12-1-7-1-9 7-4-1-3-6z" fill="#edf0f0" /><circle cx="16.500" cy="16.500" r="5.500" fill="#1677d4" /><path d="M16.500 15.500v4M16.500 13v1.200" stroke="#fff" stroke-width="1.400" /></svg>
        <svg viewBox="0 0 24 24" class="t-icon"><path d="M3 10q2-7 9-7 6 1 8 6M20 3v6h-6M3 15q2 5 7 6M3 21v-6h6" fill="none" stroke="#fff" stroke-width="1.500" /><circle cx="17" cy="17" r="5" fill="#f59b20" /></svg>
        <div class="lang">ENG<br />US</div>
        <div class="net">
          <svg viewBox="0 0 20 20"><path d="M1 8q9-9 18 0M4 11.500q6-6 12 0M7 14.500q3-3 6 0" fill="none" stroke="#fff" stroke-width="1.700" /><circle cx="10" cy="16.500" r="1.600" fill="#fff" /></svg>
          <svg viewBox="0 0 20 20"><path d="M1 7.500h3l4-4v13l-4-4H1zM11 7q2 3 0 6M13.500 5q4 5 0 10M16 3q5.500 7 0 14" fill="none" stroke="#fff" stroke-width="1.400" /></svg>
          <svg class="battery" viewBox="0 0 24 20"><rect x="1" y="5" width="20" height="11.500" rx="3" fill="none" stroke="#fff" stroke-width="1.600" /><rect x="3.500" y="7.500" width="15" height="6.500" rx="1" fill="#a8d68a" /><path d="M22.700 9v4" stroke="#fff" stroke-width="1.600" /><path d="M12.500 2L8 9.500h3.500V14l4.500-7h-3.500z" fill="#fff" stroke="#1b3030" stroke-width=".6" /></svg>
        </div>
        <div class="clock">01:42<br />2026-05-04</div>
      </div>
    </div>

    <div class="watermark" aria-hidden="true">
      <div class="wm wm-top" lang="ar" dir="rtl">نفذلي</div>
      <div class="wm wm-mid" lang="ar" dir="rtl">خمسات</div>
      <div class="wm wm-url">nafezly.com</div>
    </div>
  </div>
</template>

<style>
body {
  margin: 0;
  overflow: hidden;
}
</style>

<style scoped>
.defs {
  position: absolute;
}
.screen {
  position: relative;
  display: flex;
  flex-direction: column;
  height: 100vh;
  overflow: hidden;
  background: #eaeaea;
  color: #15151c;
  font: 16px/22px 'Liberation Sans', Arial, sans-serif;
}
button {
  display: flex;
  align-items: center;
  justify-content: center;
  margin: 0;
  padding: 0;
  border: 0;
  background: none;
  color: inherit;
  font: inherit;
}
.titlebar {
  display: flex;
  flex: none;
  align-items: center;
  height: 29px;
  padding-left: 2px;
  border-bottom: 1px solid #cfd1d0;
  background: #f3f3f3;
}
.app-icon {
  width: 20px;
  height: 20px;
}
.title {
  margin: 0 auto 0 6px;
  color: #858585;
  font: 14px/20px 'Noto Sans', sans-serif;
}
.win-buttons {
  display: flex;
  padding-right: 1px;
}
.win-buttons button {
  width: 58px;
  height: 28px;
}
.win-buttons svg {
  width: 14px;
  height: 14px;
  fill: none;
  stroke: #777;
}
.window {
  display: flex;
  flex: 1;
  flex-direction: column;
  min-height: 0;
  border-left: 1px solid #c6c6c6;
}
.menubar {
  display: flex;
  gap: 26px;
  box-sizing: border-box;
  height: 32px;
  padding: 2px 0 0 6px;
}
.menubar u {
  text-underline-offset: 2px;
}
.toolbar {
  display: flex;
  height: 47px;
  padding: 6px 0 0 9px;
}
.group {
  display: flex;
  gap: 12px;
  margin-right: 24px;
}
.group button,
.group svg {
  width: 40px;
  height: 40px;
}
.group-2 {
  gap: 16px;
}
.group-3 {
  gap: 11px;
  margin-right: 28px;
}
.group-5 {
  gap: 9px;
}
.group-6 {
  gap: 10px;
  margin-right: 20px;
}
.entry {
  display: flex;
  align-items: center;
  padding: 0 8px 3px 179px;
}
.entry input {
  flex: 1;
  box-sizing: border-box;
  height: 30px;
  border: 1px solid #a3a3a3;
  background: #fff;
  font: inherit;
}
.visible {
  width: 188px;
  padding: 2px 0 0 4px;
  white-space: nowrap;
}
.sheet {
  position: relative;
  display: flex;
  flex: 1;
  flex-direction: column;
  min-height: 0;
  padding: 4px 3px 0 2px;
  background: #fff;
}
.sheet-main {
  display: flex;
  flex: 1;
  min-height: 0;
}
.clip {
  flex: 1;
  min-width: 0;
  overflow: hidden;
}
table {
  width: 100%;
  border-spacing: 0;
  table-layout: fixed;
}
.num-col {
  width: 100px;
}
th {
  background: #f4f4f4;
  font-weight: 400;
}
thead th {
  box-sizing: border-box;
  height: 68px;
  padding: 0;
  border-right: 2px solid #fff;
  line-height: 22px;
  vertical-align: top;
}
.head {
  display: flex;
  align-items: center;
  justify-content: safe center;
  gap: 5px;
  padding-top: 2px;
  overflow: hidden;
}
.head svg {
  flex: none;
  width: 20px;
  height: 20px;
  margin-bottom: 4px;
}
.head span {
  white-space: nowrap;
}
tbody th,
tbody td {
  box-sizing: border-box;
  height: 27px;
  padding: 0 3px 0 2px;
  border-right: 1px solid #c3c3c3;
  border-bottom: 1px solid #c3c3c3;
  line-height: 26px;
  white-space: nowrap;
  vertical-align: bottom;
}
tbody tr:nth-child(odd) th,
tbody tr:nth-child(odd) td {
  height: 28px;
}
tbody th {
  padding-right: 8px;
}
.right {
  text-align: right;
}
.left {
  text-align: left;
}
.vscroll {
  display: flex;
  flex-direction: column;
  width: 20px;
  padding-top: 68px;
}
.vscroll button,
.hscroll button {
  box-sizing: border-box;
  flex: none;
  width: 18px;
  height: 18px;
  border-right: 1px solid #c0c0c0;
  border-bottom: 1px solid #c0c0c0;
  background: #f2f2f2;
}
.vscroll svg,
.hscroll svg {
  width: 10px;
  height: 10px;
  fill: none;
  stroke: #444;
  stroke-width: 2;
}
.vthumb,
.hthumb {
  box-sizing: border-box;
  border: 1px solid #a9a9a9;
  background: #dedede;
}
.vthumb {
  width: 18px;
  height: 12px;
}
.vscroll .end {
  margin-top: auto;
}
.hscroll {
  display: flex;
  flex: none;
  height: 21px;
  padding: 0 21px 0 99px;
}
.hthumb {
  width: 13px;
  height: 18px;
}
.hscroll .end {
  margin-left: auto;
}
.side-grip {
  position: absolute;
  right: 0;
  top: 50%;
  display: grid;
  gap: 2px;
  margin-top: -8px;
  width: 2px;
  overflow: hidden;
}
.side-grip i,
.divider i {
  width: 4px;
  height: 4px;
  border-radius: 2px;
  background: #2b6fdc;
}
.divider {
  display: flex;
  flex: none;
  align-items: center;
  justify-content: center;
  gap: 2px;
  box-sizing: border-box;
  height: 5px;
  border-top: 1px solid #d5d5d5;
  border-bottom: 1px solid #999;
  background: #e4e4e4;
}
.tabs {
  display: flex;
  flex: none;
  align-items: flex-start;
  height: 51px;
  padding-left: 5px;
  background: #fff;
}
.tab {
  position: relative;
  height: 45px;
  padding: 2px 10px 0;
  background: #f6f6f6;
}
.tab.current {
  padding-top: 6px;
  background: #c5c5c5;
  font-size: 17px;
  font-weight: 700;
}
.tab::after {
  position: absolute;
  right: 4px;
  bottom: 0;
  left: 4px;
  height: 3px;
  background: #e2e2e2;
  content: '';
}
.tab.current::after {
  background: #2f6fe0;
}
.status {
  display: flex;
  flex: none;
  align-items: center;
  justify-content: flex-end;
  box-sizing: border-box;
  height: 27px;
  padding: 2px 148px 0 0;
  background: #f3f3f3;
}
.ready {
  font-size: 17px;
}
.status svg {
  width: 20px;
  height: 20px;
  margin: 0 94px 2px 16px;
}
.taskbar {
  display: flex;
  flex: none;
  height: 58px;
  background: linear-gradient(90deg, #202717 0%, #1f2716 22%, #242419 38%, #29251a 52%, #282727 64%, #172a29 76%, #132b29 100%);
  color: #fff;
}
.widgets {
  width: 336px;
}
.widgets button {
  position: relative;
  width: 24px;
  height: 24px;
  margin: 18px 0 0 29px;
}
.widgets svg {
  width: 24px;
  height: 24px;
}
.badge {
  position: absolute;
  top: -9px;
  right: -7px;
  width: 20px;
  height: 20px;
  border-radius: 10px;
  background: #fb8d9d;
  color: #4b1820;
  font: 14px/20px 'Open Sans', sans-serif;
  text-align: center;
}
.apps {
  display: flex;
}
.apps button {
  position: relative;
  width: 40px;
  height: 58px;
}
.apps svg {
  position: relative;
  width: 20px;
  height: 20px;
  margin-top: 2px;
}
.apps .active::before {
  position: absolute;
  inset: 5px 2px 3px;
  border-radius: 4px;
  background: #7c4048;
  content: '';
}
.apps .open::after,
.apps .active::after {
  position: absolute;
  bottom: 4px;
  left: 18px;
  width: 5px;
  height: 4px;
  border-radius: 2px;
  background: #a0a39d;
  content: '';
}
.apps .active::after {
  left: 8px;
  width: 24px;
  background: #f88fa3;
}
.apps .note::before {
  position: absolute;
  top: 15px;
  right: 6px;
  width: 5px;
  height: 5px;
  border-radius: 3px;
  background: #8e9bb5;
  content: '';
}
.tray {
  display: flex;
  align-items: center;
  gap: 16px;
  margin-left: auto;
  padding-right: 22px;
  font: 15px/20px 'Open Sans', 'Noto Sans', sans-serif;
}
.t-icon {
  width: 24px;
  height: 24px;
}
.lang {
  width: 40px;
  text-align: center;
}
.net {
  display: flex;
  gap: 11px;
  padding-right: 2px;
}
.net svg {
  width: 20px;
  height: 20px;
}
.net .battery {
  width: 24px;
}
.clock {
  width: 80px;
  text-align: right;
}
.watermark {
  position: absolute;
  bottom: 0;
  left: 50%;
  display: grid;
  width: 240px;
  height: 120px;
  transform: translateX(-50%);
  pointer-events: none;
}
.wm {
  grid-area: 1 / 1;
  text-align: center;
  white-space: nowrap;
}
.wm-top {
  color: rgba(200, 200, 200, 0.6);
  font: 700 72px/88px 'DejaVu Sans', sans-serif;
}
.wm-mid {
  align-self: end;
  color: rgba(190, 190, 190, 0.4);
  font: 700 60px/88px 'DejaVu Sans', sans-serif;
}
.wm-url {
  align-self: end;
  color: rgba(225, 225, 225, 0.8);
  font: 600 34px/40px 'Open Sans', sans-serif;
}
</style>
